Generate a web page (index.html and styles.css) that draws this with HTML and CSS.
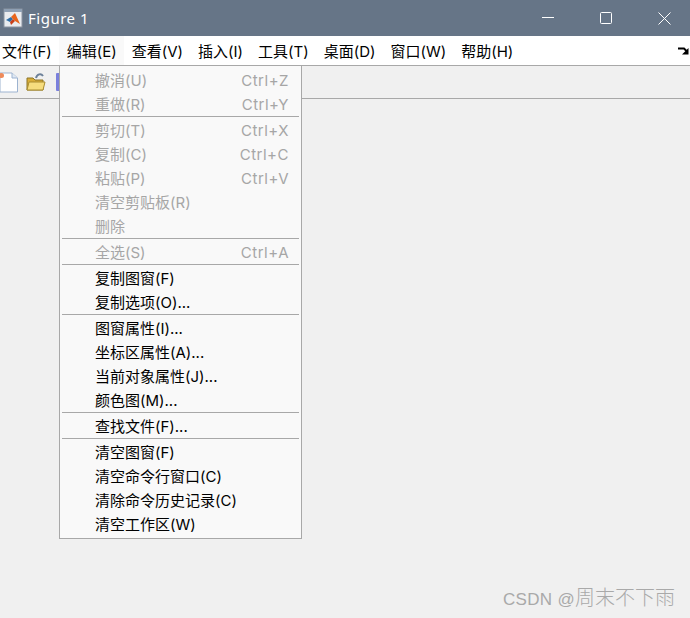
FILE: index.html
```html
<!DOCTYPE html>
<html lang="zh-CN">
  <head>
    <meta charset="UTF-8" />
    <title>Figure 1</title>
    <link rel="stylesheet" href="styles.css">
  </head>
  <body>
    <div class="titlebar">
      <svg class="logo" width="20" height="20" viewBox="0 0 20 20">
        <rect x="1" y="1" width="18" height="18" fill="#e9ecef" stroke="#8a93a0"/>
        <rect x="1" y="1" width="18" height="3" fill="#8fa0b4"/>
        <path d="M3 12 L8 9 L10 11 L7 14 Z" fill="#2f6fa8"/>
        <path d="M8 9 L12 5 L17 16 L12 13 L10 11 Z" fill="#e8641b"/>
        <path d="M10 11 L12 13 L8 17 L7 14 Z" fill="#c8401a"/>
      </svg>
      <span class="title">Figure 1</span>
      <div class="winbtns">
        <span class="winbtn"><svg width="12" height="12" viewBox="0 0 12 12"><path d="M0 5.5H12" stroke="#fff"/></svg></span>
        <span class="winbtn"><svg width="12" height="12" viewBox="0 0 12 12"><rect x="0.5" y="0.5" width="11" height="11" rx="1" fill="none" stroke="#fff"/></svg></span>
        <span class="winbtn"><svg width="13" height="13" viewBox="0 0 13 13"><path d="M0.5 0.5L12.5 12.5M12.5 0.5L0.5 12.5" stroke="#fff"/></svg></span>
      </div>
    </div>

    <div class="menubar">
      <span class="menu-item first">文件(F)</span>
      <span class="menu-item open">编辑(E)</span>
      <span class="menu-item">查看(V)</span>
      <span class="menu-item">插入(I)</span>
      <span class="menu-item">工具(T)</span>
      <span class="menu-item">桌面(D)</span>
      <span class="menu-item">窗口(W)</span>
      <span class="menu-item">帮助(H)</span>
      <svg class="dock" width="11" height="8" viewBox="0 0 11 8"><path d="M0 1.500H6L9 4.500" fill="none" stroke="#000" stroke-width="2"/><path d="M10.500 1V7.500H4Z" fill="#000"/></svg>
    </div>

    <div class="toolbar">
      <svg class="tool tool-new" width="20" height="21" viewBox="0 0 20 21">
        <path d="M1 1H13L18.500 6V20H1Z" fill="#fff" stroke="#9db3d0"/>
        <path d="M13 1V6H18.500" fill="#dfe8f3" stroke="#9db3d0"/>
        <circle cx="2.500" cy="3.500" r="2.500" fill="#ee8a5a"/>
      </svg>
      <svg class="tool tool-open" width="20" height="18" viewBox="0 0 20 18">
        <path d="M1 5H7L9 7H17V17H1Z" fill="#d9ad38" stroke="#8c7526"/>
        <path d="M1 17L3 9H19L17 17Z" fill="#f6dd7e" stroke="#a88c30"/>
        <path d="M10 5C11 1 15 0 17 3" fill="none" stroke="#6c8099" stroke-width="2"/>
      </svg>
      <svg class="tool tool-save" width="5" height="18" viewBox="0 0 5 18">
        <rect width="5" height="18" rx="1" fill="#7a80dc"/>
      </svg>
    </div>

    <div class="canvas">
      <span class="watermark">CSDN @<span class="watermark-cjk">周末不下雨</span></span>
    </div>

    <div class="dropdown">
      <div class="row off"><span>撤消(U)</span><span class="keys">Ctrl+Z</span></div>
      <div class="row off"><span>重做(R)</span><span class="keys">Ctrl+Y</span></div>
      <div class="sep"></div>
      <div class="row off"><span>剪切(T)</span><span class="keys">Ctrl+X</span></div>
      <div class="row off"><span>复制(C)</span><span class="keys">Ctrl+C</span></div>
      <div class="row off"><span>粘贴(P)</span><span class="keys">Ctrl+V</span></div>
      <div class="row off"><span>清空剪贴板(R)</span></div>
      <div class="row off"><span>删除</span></div>
      <div class="sep"></div>
      <div class="row off"><span>全选(S)</span><span class="keys">Ctrl+A</span></div>
      <div class="sep"></div>
      <div class="row"><span>复制图窗(F)</span></div>
      <div class="row"><span>复制选项(O)...</span></div>
      <div class="sep"></div>
      <div class="row"><span>图窗属性(I)...</span></div>
      <div class="row"><span>坐标区属性(A)...</span></div>
      <div class="row"><span>当前对象属性(J)...</span></div>
      <div class="row"><span>颜色图(M)...</span></div>
      <div class="sep"></div>
      <div class="row"><span>查找文件(F)...</span></div>
      <div class="sep"></div>
      <div class="row"><span>清空图窗(F)</span></div>
      <div class="row"><span>清空命令行窗口(C)</span></div>
      <div class="row"><span>清除命令历史记录(C)</span></div>
      <div class="row"><span>清空工作区(W)</span></div>
    </div>
  </body>
</html>
```

FILE: styles.css
```css
html, body {
  margin: 0;
  height: 100%;
}
body {
  position: relative;
  display: flex;
  flex-direction: column;
  overflow: hidden;
  font-family: Inter, "Noto Sans CJK SC", sans-serif;
  font-size: 15px;
  line-height: 20px;
  color: #000;
  background: #f0f0f0;
}
.titlebar {
  display: flex;
  align-items: center;
  height: 36px;
  padding-left: 3px;
  background: #667587;
  color: #fff;
}
.title {
  margin-left: 5px;
  font-family: "Noto Sans", sans-serif;
  font-size: 15px;
  letter-spacing: 0.5px;
}
.winbtns {
  display: flex;
  margin-left: auto;
  margin-right: -3px;
}
.winbtn {
  display: flex;
  align-items: center;
  justify-content: center;
  width: 58px;
  height: 36px;
}
.menubar {
  display: flex;
  align-items: center;
  height: 29px;
  background: #fff;
  border-bottom: 1px solid #a8a8a8;
}
.menu-item {
  display: flex;
  align-items: center;
  height: 100%;
  padding: 2px 7.5px 0;
  box-sizing: border-box;
  white-space: nowrap;
}
.menu-item.first {
  padding-left: 2px;
}
.menu-item.open {
  background: #f9f9f9;
}
.dock {
  margin-left: auto;
  margin-right: 1px;
}
.toolbar {
  display: flex;
  align-items: center;
  gap: 7px;
  height: 32px;
  background: #f0f0f0;
  border-bottom: 1px solid #a8a8a8;
}
.tool-new {
  margin-left: -1px;
}
.tool-save {
  margin-left: 3px;
}
.canvas {
  flex: 1;
  display: flex;
  align-items: flex-end;
  justify-content: flex-end;
  padding: 0 15px 8px 0;
}
.watermark {
  font-family: "Liberation Sans", sans-serif;
  font-size: 17px;
  letter-spacing: 0.3px;
  color: #a9a9a9;
}
.watermark-cjk {
  font-family: "Noto Sans CJK SC", sans-serif;
  font-size: 20px;
  font-weight: 300;
  letter-spacing: 0;
}
.dropdown {
  position: absolute;
  left: 59px;
  top: 65px;
  width: 241px;
  padding: 2px 0;
  background: #f9f9f9;
  border: 1px solid #a8a8a8;
}
.row {
  display: flex;
  justify-content: space-between;
  align-items: center;
  height: 24px;
  padding: 2px 12px 0 35px;
  box-sizing: border-box;
  white-space: nowrap;
}
.row.off {
  color: #a6a6a6;
}
.keys {
  letter-spacing: 0.5px;
}
.sep {
  height: 1px;
  margin: 0 2px 1px;
  background: #a8a8a8;
}
```
